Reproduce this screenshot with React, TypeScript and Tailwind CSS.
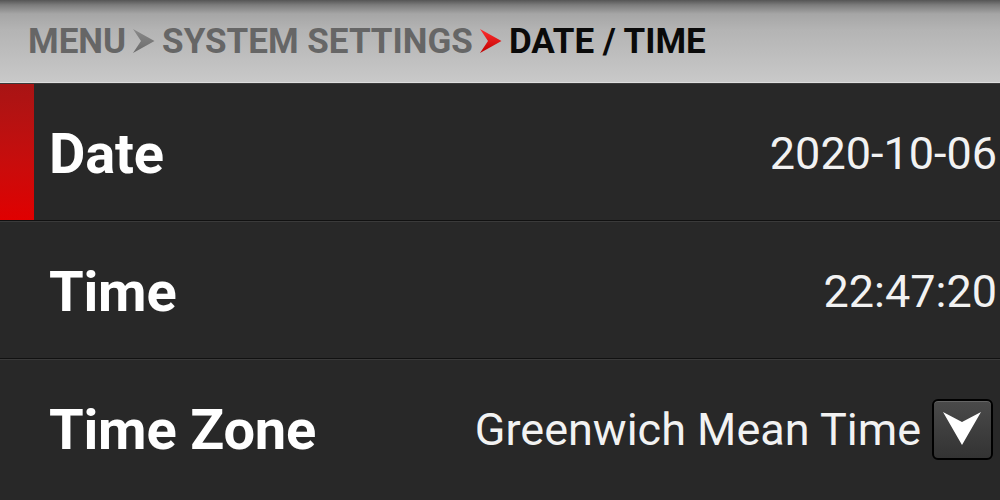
import React from "react";

const Chevron = ({ from, to, id }: { from: string; to: string; id: string }) => (
  <svg width="22" height="24" viewBox="0 0 22 24" className="shrink-0">
    <defs>
      <linearGradient id={id} x1="0" y1="0" x2="0" y2="1">
        <stop offset="0" stopColor={from} />
        <stop offset="1" stopColor={to} />
      </linearGradient>
    </defs>
    <polygon points="0,0 21.5,12 0,24 8,12" fill={`url(#${id})`} />
  </svg>
);

const Row = ({
  label,
  value,
  active,
  dropdown,
  last,
}: {
  label: string;
  value: string;
  active?: boolean;
  dropdown?: boolean;
  last?: boolean;
}) => (
  <div
    className={`flex items-stretch bg-[#282828] ${last ? "h-[137px]" : "h-[138px]"} border-t border-[#3a3a3a] ${
      last ? "" : "border-b border-b-[#111111]"
    }`}
  >
    <div
      className={`w-[34px] shrink-0 ${
        active ? "bg-gradient-to-b from-[#a81414] to-[#e00000]" : ""
      }`}
    />
    <div className="flex flex-1 items-center justify-between pl-[15px] pr-[3px]">
      <span className="pt-[4px] text-[56px] font-bold text-white leading-none tracking-[-0.2px]">{label}</span>
      <div className="flex items-center gap-[11px]">
        <span className="pt-[3px] text-[45px] text-[#f2f2f2] leading-none">{value}</span>
        {dropdown && (
          <div className="relative mr-[4px] mt-[2px] h-[61px] w-[61px] rounded-[6px] border-2 border-black bg-gradient-to-b from-[#4a4a4a] to-[#333333] shadow-[inset_0_1px_0_rgba(255,255,255,0.15)]">
            <svg width="57" height="57" viewBox="0 0 57 57" className="absolute left-0 top-0">
              <polygon points="9,11 28,21 47,11 28,44" fill="#ffffff" />
            </svg>
          </div>
        )}
      </div>
    </div>
  </div>
);

export default function App() {
  return (
    <div
      className="h-[500px] w-[1000px] overflow-hidden bg-[#282828]"
      style={{ fontFamily: "Roboto, 'Liberation Sans', sans-serif" }}
    >
      <div className="flex h-[83px] items-center gap-[7px] bg-[linear-gradient(to_bottom,#555555_0px,#7c7c7c_5px,#a6a6a6_14px,#b4b4b4_30px,#c9c9c9_83px)] pl-[28px] border-b border-[#dedede]">
        <span className="text-[35px] font-bold text-[#666666] leading-none">MENU</span>
        <Chevron from="#8a8a8a" to="#6a6a6a" id="g1" />
        <span className="text-[35px] font-bold text-[#666666] leading-none">SYSTEM SETTINGS</span>
        <Chevron from="#ff3030" to="#c00000" id="g2" />
        <span className="text-[35px] font-bold text-[#0a0a0a] leading-none">DATE / TIME</span>
      </div>
      <Row label="Date" value="2020-10-06" active />
      <Row label="Time" value="22:47:20" />
      <Row label="Time Zone" value="Greenwich Mean Time" dropdown last />
    </div>
  );
}
